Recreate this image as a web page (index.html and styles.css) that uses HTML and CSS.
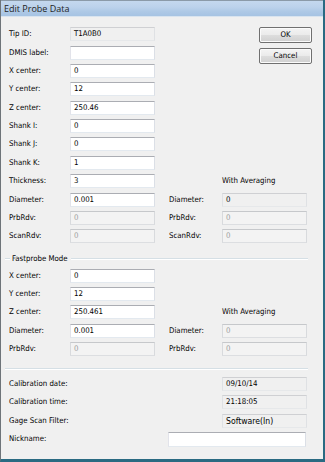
FILE: index.html
```html
<!DOCTYPE html>
<html>
<head>
<meta charset="utf-8">
<link rel="stylesheet" href="styles.css">
</head>
<body>
<div class="window">
  <div class="titlebar">Edit Probe Data</div>
  <div class="client">
    <div class="grid main">
      <div class="buttons"><button class="btn">OK</button><button class="btn">Cancel</button></div>
      <span class="lbl c1">Tip ID:</span><span class="box ro c2">T1A0B0</span>
      <span class="lbl c1">DMIS label:</span><span class="box c2"></span>
      <span class="lbl c1">X center:</span><span class="box c2">0</span>
      <span class="lbl c1">Y center:</span><span class="box c2">12</span>
      <span class="lbl c1">Z center:</span><span class="box c2">250.46</span>
      <span class="lbl c1">Shank I:</span><span class="box c2">0</span>
      <span class="lbl c1">Shank J:</span><span class="box c2">0</span>
      <span class="lbl c1">Shank K:</span><span class="box c2">1</span>
      <span class="lbl c1">Thickness:</span><span class="box c2">3</span><span class="lbl c5">With Averaging</span>
      <span class="lbl c1">Diameter:</span><span class="box c2">0.001</span><span class="lbl c4">Diameter:</span><span class="box ro c5">0</span>
      <span class="lbl c1">PrbRdv:</span><span class="box dis c2">0</span><span class="lbl c4">PrbRdv:</span><span class="box dis c5">0</span>
      <span class="lbl c1">ScanRdv:</span><span class="box dis c2">0</span><span class="lbl c4">ScanRdv:</span><span class="box dis c5">0</span>
    </div>

    <div class="group-head"><span class="group-title">Fastprobe Mode</span></div>

    <div class="grid fast">
      <span class="lbl c1">X center:</span><span class="box c2">0</span>
      <span class="lbl c1">Y center:</span><span class="box c2">12</span>
      <span class="lbl c1">Z center:</span><span class="box c2">250.461</span><span class="lbl c5">With Averaging</span>
      <span class="lbl c1">Diameter:</span><span class="box c2">0.001</span><span class="lbl c4">Diameter:</span><span class="box dis c5">0</span>
      <span class="lbl c1">PrbRdv:</span><span class="box dis c2">0</span><span class="lbl c4">PrbRdv:</span><span class="box dis c5">0</span>
    </div>

    <div class="sep"></div>

    <div class="grid calib">
      <span class="lbl k1">Calibration date:</span><span class="box ro k3">09/10/14</span>
      <span class="lbl k1">Calibration time:</span><span class="box ro k3">21:18:05</span>
      <span class="lbl k1">Gage Scan Filter:</span><span class="box ro big k3">Software(In)</span>
      <span class="lbl k1">Nickname:</span><span class="box nick">&nbsp;</span>
    </div>
  </div>
</div>
</body>
</html>
```

FILE: styles.css
```css
html, body {
  margin: 0;
  padding: 0;
  background: #f0f0f0;
}

.window {
  width: 325px;
  height: 462px;
  box-sizing: border-box;
  border-left: 1px solid #6e7479;
  border-right: 2px solid #2a6a82;
  border-bottom: 3px solid #2a6a82;
  background: #f0f0f0;
  font-family: "DejaVu Sans Condensed", "DejaVu Sans", sans-serif;
  font-size: 7.8px;
  color: #000;
  overflow: hidden;
}

.titlebar {
  height: 17px;
  box-sizing: border-box;
  border-top: 1px solid #8b9aa8;
  border-bottom: 1px solid #d9e4ef;
  background: linear-gradient(#c4d8ee 0%, #bcd2eb 40%, #aec9e6 70%, #a6c3e3 100%);
  font-family: "Open Sans", "Noto Sans", sans-serif;
  font-size: 9px;
  line-height: 15px;
  padding-left: 3px;
  color: #1e1e1e;
}

.client {
  padding-left: 8px;
}

.grid {
  display: grid;
  grid-auto-rows: 18.36px;
  align-items: start;
}

.main,
.fast {
  grid-template-columns: 61px 85px 14px 53px 85px 5px;
}

.main {
  margin-top: 10.3px;
}

.c1 { grid-column: 1; }
.c2 { grid-column: 2; }
.c4 { grid-column: 4; }
.c5 { grid-column: 5; }

.lbl {
  line-height: 14px;
  white-space: nowrap;
}

.box {
  display: block;
  height: 14px;
  box-sizing: border-box;
  border: 1px solid;
  border-color: #abadb3 #dbdfe6 #e3e9ef #e2e3ea;
  background: #ffffff;
  padding-left: 3px;
  line-height: 12px;
  white-space: nowrap;
  color: #000;
}

.box.ro {
  background: #f0f0f0;
  border-color: #cfd0d3 #dfe1e4 #e6e8ea #dfe1e4;
}

.box.dis {
  background: #f3f3f3;
  border-color: #c6c8cb #d8dadd #dcdee1 #d8dadd;
  color: #9d9d9d;
}

.buttons {
  grid-column: 4 / 7;
  grid-row: 1 / 4;
  justify-self: end;
  display: flex;
  flex-direction: column;
  gap: 5px;
}

.btn {
  width: 53px;
  height: 16px;
  box-sizing: border-box;
  border: 1px solid #707070;
  border-radius: 2px;
  background: linear-gradient(#f4f4f4 0%, #ebebeb 48%, #dddddd 52%, #d0d0d0 100%);
  box-shadow: inset 0 0 0 1px #fbfbfb;
  font-family: inherit;
  font-size: 7.8px;
  color: #000;
  padding: 0;
  line-height: 14px;
  margin: 0;
}

.group-head {
  margin-top: 4.4px;
  margin-left: -4px;
  width: 303px;
  height: 14px;
  display: flex;
  align-items: center;
}

.group-head::before {
  content: "";
  width: 5px;
  border-top: 1px solid #d5dfe5;
  border-bottom: 1px solid #ffffff;
}

.group-head::after {
  content: "";
  flex: 1;
  border-top: 1px solid #d5dfe5;
  border-bottom: 1px solid #ffffff;
}

.group-title {
  padding: 0 3px 0 2px;
  line-height: 14px;
  color: #000;
}

.fast {
  margin-top: 2.5px;
}

.sep {
  margin-top: 7.7px;
  margin-left: -4px;
  width: 303px;
  border-top: 1px solid #d5dfe5;
  border-bottom: 1px solid #ffffff;
}

.calib {
  margin-top: 7px;
  grid-template-columns: 159px 54px 85px;
}

.k1 { grid-column: 1; }
.k3 { grid-column: 3; }

.box.big {
  font-size: 8.6px;
}

.box.nick {
  grid-column: 2 / 4;
  width: 138px;
  height: 15px;
}
```
